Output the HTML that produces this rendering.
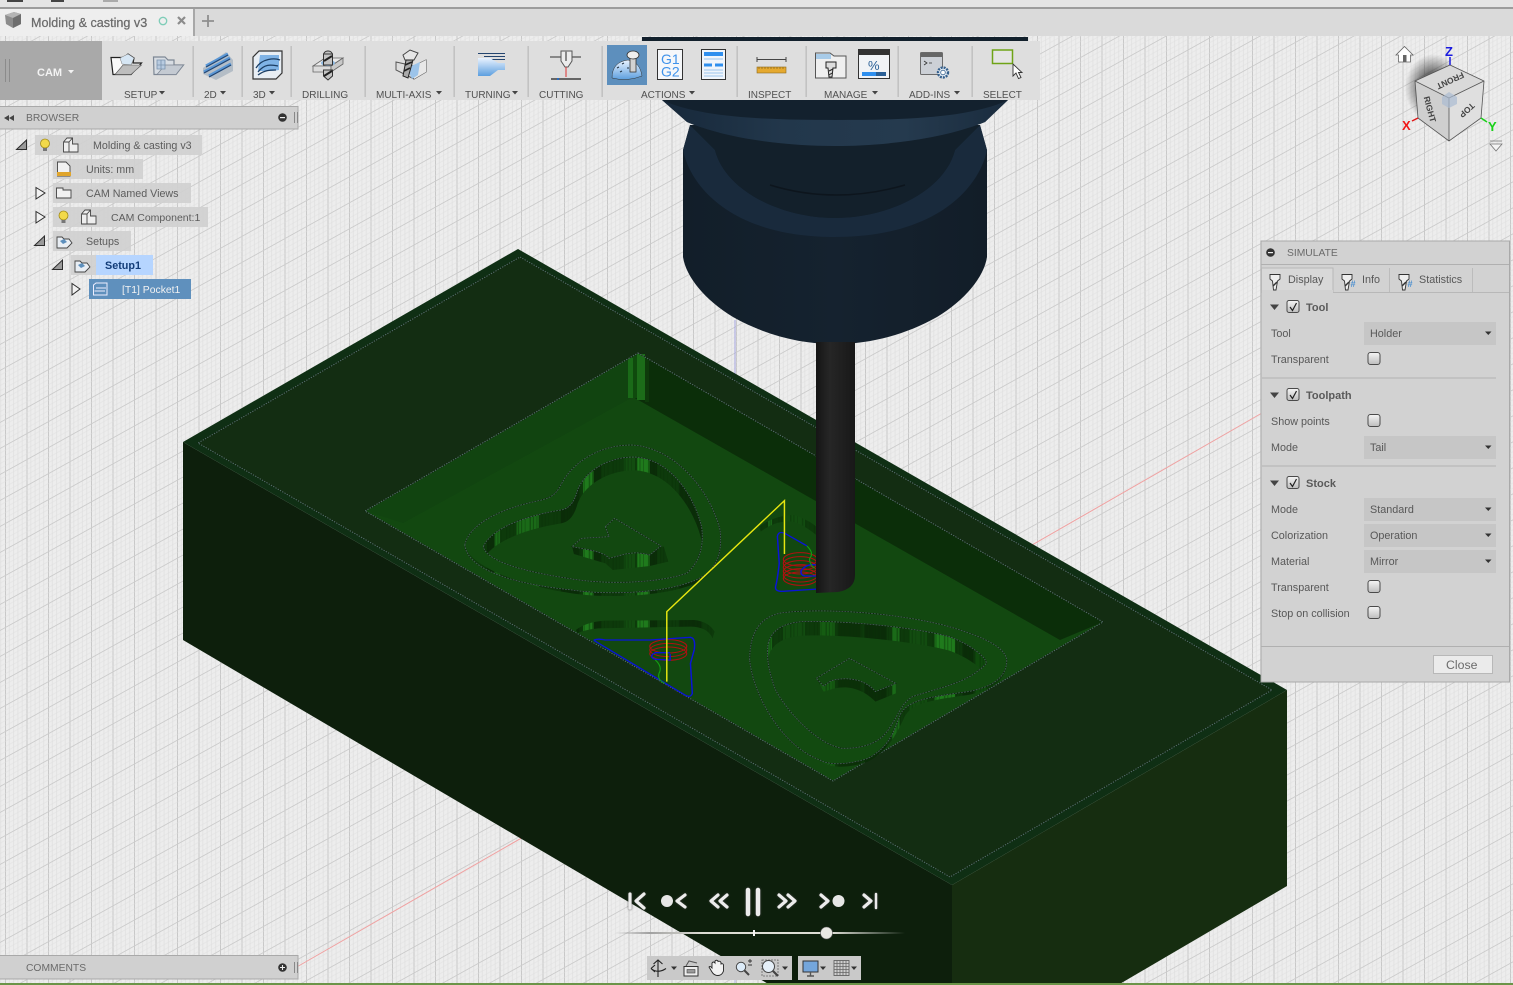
<!DOCTYPE html>
<html><head><meta charset="utf-8"><title>Molding &amp; casting v3</title>
<style>
html,body{margin:0;padding:0;width:1513px;height:985px;overflow:hidden;background:#ebebeb}
svg{display:block;position:absolute;left:0;top:0}
text{font-family:"Liberation Sans",sans-serif;fill:#5a5a5a;font-size:10.3px}
.t{font-size:10px;fill:#505050}
.b{font-size:10.7px;fill:#5c5c5c}
.p{font-size:10.8px;fill:#585858}
.h{font-size:11px;font-weight:bold;fill:#5a5a5a}
</style></head><body>
<svg width="1513" height="985" viewBox="0 0 1513 985" xmlns="http://www.w3.org/2000/svg">
<defs>
<pattern id="gv" x="5" y="0" width="21.5" height="40" patternUnits="userSpaceOnUse">
<rect width="21.5" height="40" fill="#ededed"/>
<g stroke="#e3e3e3" stroke-width="1"><path d="M4.3 0V40M8.6 0V40M12.9 0V40M17.2 0V40"/></g>
<path d="M.5 0V40" stroke="#c8c8c8" stroke-width="1"/>
</pattern>
<pattern id="gd" x="0" y="6" width="40" height="26" patternUnits="userSpaceOnUse" patternTransform="skewY(-29)">
<g stroke="#dedede" stroke-width="1" opacity=".5"><path d="M0 5.2H40M0 10.4H40M0 15.6H40M0 20.8H40"/></g>
<path d="M0 .5H40" stroke="#cbcbcb" stroke-width="1"/>
</pattern>
<pattern id="st" width="1600" height="40" patternUnits="userSpaceOnUse">
<rect width="1600" height="40" fill="#0d3a0b"/>
<g>
<rect x="100" width="20" height="40" fill="#0a2c08"/><rect x="120" width="15" height="40" fill="#1a6a18"/>
<rect x="180" width="60" height="40" fill="#1a6a18"/><rect x="300" width="50" height="40" fill="#0a2c08"/>
<rect x="360" width="28" height="40" fill="#1f7a1c"/><rect x="388" width="20" height="40" fill="#0a2c08"/>
<rect x="470" width="30" height="40" fill="#124c10"/><rect x="505" width="35" height="40" fill="#1f7a1c"/>
<rect x="540" width="20" height="40" fill="#0a2c08"/><rect x="620" width="60" height="40" fill="#0a2c08"/>
<rect x="860" width="10" height="40" fill="#1a6a18"/><rect x="900" width="60" height="40" fill="#124c10"/>
<rect x="1000" width="40" height="40" fill="#155c12"/><rect x="1050" width="60" height="40" fill="#0b3008"/>
<rect x="1120" width="60" height="40" fill="#0a2c08"/><rect x="1195" width="20" height="40" fill="#1a6a18"/>
<rect x="1240" width="50" height="40" fill="#124c10"/><rect x="1310" width="55" height="40" fill="#1f7a1c"/>
<rect x="1385" width="30" height="40" fill="#0a2c08"/><rect x="1420" width="30" height="40" fill="#0f4a0d"/>
</g>
<path d="M0,20H1600" stroke="#083006" stroke-width="40" stroke-dasharray="3 7 2 11 4 5" opacity=".45"/>
</pattern>
<linearGradient id="sl" x1="0" x2="1"><stop offset="0" stop-color="#999" stop-opacity="0"/><stop offset=".12" stop-color="#a0a0a0"/><stop offset=".3" stop-color="#dcdcd4"/><stop offset=".75" stop-color="#dcdcd4"/><stop offset="1" stop-color="#ddd" stop-opacity="0"/></linearGradient>
<linearGradient id="hold" x1="0" x2="1"><stop offset="0" stop-color="#121e29"/><stop offset=".5" stop-color="#15222f"/><stop offset="1" stop-color="#121d28"/></linearGradient>
<linearGradient id="sh" x1="0" x2="1"><stop offset="0" stop-color="#151515"/><stop offset=".35" stop-color="#262626"/><stop offset="1" stop-color="#181818"/></linearGradient>
<linearGradient id="cb" x1="0" x2="0" y1="0" y2="1"><stop offset="0" stop-color="#f6f6f6"/><stop offset="1" stop-color="#bdbdbd"/></linearGradient>
<linearGradient id="blu" x1="0" x2="0" y1="0" y2="1"><stop offset="0" stop-color="#eaf3ff"/><stop offset="1" stop-color="#5c9fdf"/></linearGradient>
<linearGradient id="band" x1="0" x2="1"><stop offset="0" stop-color="#17283a"/><stop offset=".35" stop-color="#22374b"/><stop offset=".7" stop-color="#253a4e"/><stop offset="1" stop-color="#1a2c3e"/></linearGradient>
<radialGradient id="shd"><stop offset=".45" stop-color="#333" stop-opacity=".7"/><stop offset="1" stop-color="#444" stop-opacity="0"/></radialGradient>
<path id="lo" d="M40,345C50,290 120,240 240,212C290,200 290,180 310,145C350,80 420,45 490,45C600,50 700,170 730,300C740,400 700,440 640,460C560,490 420,495 330,480C200,465 50,430 40,345Z"/>
<path id="ro" d="M810,690C810,620 830,560 900,548C1000,535 1200,545 1350,590C1440,620 1500,650 1505,690C1505,740 1470,770 1400,785C1300,800 1230,810 1215,860C1200,900 1190,950 1130,985C1090,1000 1030,1010 1000,990C900,950 820,800 810,690Z"/>
<path id="li" d="M90,350C110,300 190,260 300,240C330,235 340,200 345,180C370,110 450,75 510,82C600,95 660,200 680,290C690,370 660,410 640,430C560,460 420,465 320,445C230,430 100,400 90,350Z"/>
<path id="ri" d="M860,640C870,600 900,580 950,575C1050,570 1250,590 1350,620C1400,640 1450,680 1450,700C1400,760 1330,770 1250,800C1220,820 1215,850 1190,890C1160,950 1100,955 1060,955C1000,945 920,860 880,780C860,720 855,680 860,640Z"/>
<path id="k1" d="M420,290L445,265L570,348L540,375C490,360 470,375 430,385C415,365 370,358 330,350L355,325L430,320Z"/>
<path id="k2" d="M990,745L1080,685L1205,760L1150,785C1120,745 1070,740 1030,752L1010,768Z"/>
<clipPath id="lh"><use href="#li"/></clipPath>
<clipPath id="rh"><use href="#ri"/></clipPath>
</defs>

<!-- viewport grid -->
<rect width="1513" height="985" fill="url(#gv)"/>
<rect width="1513" height="985" fill="url(#gd)"/>
<path d="M295,968L1262,413" stroke="#f0a0a0" stroke-width="1" fill="none"/>
<path d="M735,320V378" stroke="#a5a5e0" stroke-width="1"/>
<path d="M735,960V985" stroke="#b5b5e6" stroke-width="1"/>

<!-- block sides -->
<polygon points="183,442 952,885 952,985 770,985 183,640" fill="#0d1f0c"/>
<polygon points="952,885 1287,690 1287,886 1118,985 952,985" fill="#162d10"/>
<!-- block top -->
<polygon points="518,249 1287,690 952,885 183,442" fill="#0f2f14"/>
<polygon points="520,257 1272,690 950,877 198,443" fill="#132d12"/>
<polygon points="520,257 1272,690 950,877 198,443" fill="none" stroke="#0c1f0c" stroke-width="1"/>
<polygon points="520,257 1272,690 950,877 198,443" fill="none" stroke="#566f6b" stroke-width="1" stroke-dasharray="1.4 1.2"/>
<!-- pocket -->
<polygon points="638,353 1103,622 833,781 365,511" fill="#124810"/>
<polygon points="638,353 633,397 403,523 365,511" fill="#114410"/>
<polygon points="638,353 1103,622 1060,640 633,397" fill="#0b2e09"/>
<g><rect x="628" y="358" width="5" height="40" fill="#1a6a18"/><rect x="633" y="356" width="4" height="42" fill="#0f4a0d"/><rect x="637" y="354" width="8" height="46" fill="#1c6c19"/><rect x="645" y="358" width="4" height="44" fill="#0e3a0b"/></g>
<polygon points="638,353 1103,622 833,781 365,511" fill="none" stroke="#0c1f0c" stroke-width="1"/>
<polygon points="638,353 1103,622 833,781 365,511" fill="none" stroke="#566f6b" stroke-width="1" stroke-dasharray="1.4 1.2"/>

<!-- hearts & toolpath, in detail coords -->
<g transform="translate(450,430) scale(.36995,.33333)">
<use href="#lo" fill="#124a10"/><use href="#ro" fill="#124a10"/>
<path d="M40,345C50,410 200,470 330,490C420,505 560,500 640,470C700,450 740,410 730,300C738,400 700,440 640,460C560,490 420,495 330,480C200,465 60,430 40,345Z" fill="url(#st)"/>
<path d="M1000,990C1030,1022 1090,1010 1130,995C1190,960 1210,900 1225,870C1240,820 1300,810 1400,795C1470,780 1505,750 1505,690C1505,740 1470,770 1400,785C1300,800 1230,810 1215,860C1200,900 1190,950 1130,985C1090,1000 1030,1010 1000,990Z" fill="url(#st)"/>
<g clip-path="url(#lh)">
<rect x="60" y="60" width="660" height="420" fill="url(#st)"/>
<use href="#li" transform="translate(0,40)" fill="#124810"/>
<rect x="60" y="450" width="660" height="30" fill="#124810"/>
</g>
<g clip-path="url(#rh)">
<rect x="840" y="560" width="630" height="420" fill="url(#st)"/>
<use href="#ri" transform="translate(0,42)" fill="#124810"/>
</g>
<g fill="none" stroke="#0a1c0a" stroke-width="2.4">
<use href="#lo"/><use href="#ro"/><use href="#li"/><use href="#ri"/>
</g>
<g fill="none" stroke="#466058" stroke-width="2.4" stroke-dasharray="5 3">
<use href="#lo"/><use href="#ro"/><use href="#li"/><use href="#ri"/>
</g>
<!-- key shapes -->
<path d="M330,350L335,372L420,400L440,420L540,408L590,395L578,350L470,345L430,320L355,325Z" fill="url(#st)"/>
<use href="#k1" fill="#124810" stroke="#0a1c0a" stroke-width="2.4"/>
<use href="#k1" fill="none" stroke="#466058" stroke-width="2.4" stroke-dasharray="5 3"/>
<path d="M990,745L1010,785L1040,775C1080,765 1120,780 1150,815L1205,790L1205,760L1080,705Z" fill="url(#st)"/>
<use href="#k2" fill="#124810" stroke="#0a1c0a" stroke-width="2.4"/>
<use href="#k2" fill="none" stroke="#466058" stroke-width="2.4" stroke-dasharray="5 3"/>
<!-- partial pockets -->
<path d="M340,600Q370,575 420,572L660,570Q700,575 715,605L710,625Q695,590 650,590L400,595Q360,600 345,610Z" fill="url(#st)"/>
<path d="M835,290Q880,255 930,255Q970,270 990,290V315Q950,280 925,275Q880,270 840,305Z" fill="url(#st)"/>
<!-- toolpaths -->
<g fill="none" stroke="#b01010" stroke-width="3">
<ellipse cx="947" cy="388" rx="46" ry="20"/><ellipse cx="947" cy="400" rx="46" ry="20"/><ellipse cx="947" cy="412" rx="46" ry="20"/><ellipse cx="947" cy="424" rx="46" ry="20"/><ellipse cx="947" cy="436" rx="46" ry="20"/><ellipse cx="947" cy="446" rx="46" ry="20"/>
<ellipse cx="590" cy="649" rx="50" ry="20"/><ellipse cx="590" cy="660" rx="50" ry="20"/><ellipse cx="590" cy="671" rx="50" ry="20"/>
</g>
<g fill="none" stroke="#0a14d8" stroke-width="4">
<path d="M965,348L905,310Q887,302 885,320L890,400Q885,450 880,470Q878,485 900,484L995,477"/>
<path d="M990,405Q965,400 950,420Q945,435 960,438L995,438"/>
<path d="M390,630Q400,625 420,630L540,630L650,622Q665,625 660,660L650,700L655,790Q650,805 635,795L390,632Z"/>
<path d="M595,668H555Q535,680 555,688L595,690V672"/>
</g>
<g fill="none" stroke="#12a012" stroke-width="3">
<path d="M965,348Q985,370 972,385Q970,400 985,415"/>
<path d="M555,690Q575,710 565,730Q560,750 580,760"/>
</g>
<path d="M904,372V212L586,545V755" fill="none" stroke="#e6e610" stroke-width="4"/>
</g>

<!-- holder -->
<path d="M690,125L683,150V257C686,277 705,300 733,317C765,335 800,344 835,344C870,344 905,335 937,317C965,300 984,277 987,257V150L980,125Z" fill="url(#hold)"/>
<path d="M683,150C690,185 730,237 835,237C940,237 980,185 987,150L980,125L955,150C945,190 890,218 835,218C780,218 725,190 715,150L690,125Z" fill="#192a3c"/>
<path d="M690,125L715,150C725,190 780,218 835,218C890,218 945,190 955,150L980,125Z" fill="#13202b"/>
<path d="M770,185Q835,205 905,185" stroke="#0d151d" stroke-width="1.500" fill="none"/>
<path d="M655,41H1015L1008,100L985,122C940,140 880,146 835,146C790,146 730,140 687,122L662,100Z" fill="#13212e"/>
<path d="M662,100C700,118 770,120 835,120C905,120 970,118 1008,100L985,122C940,140 880,146 835,146C790,146 730,140 687,122Z" fill="url(#band)"/>
<rect x="642" y="37" width="386" height="5" fill="#12202c"/>
<!-- shank -->
<path d="M816,342H855V575Q855,589 838,592L816,593Z" fill="url(#sh)"/>

<!-- top chrome -->
<rect width="1513" height="8" fill="#e4e4e4"/>
<rect y="7" width="1513" height="2" fill="#9c9c9c"/>
<rect x="7" y="0" width="16" height="2" fill="#444"/><rect x="51" y="0" width="13" height="2" fill="#444"/><rect x="103" y="0" width="15" height="2" fill="#aaa"/>
<rect y="9" width="1513" height="27" fill="#dadada"/>
<rect y="9" width="193" height="27" fill="#eeeeee"/>
<rect x="193" y="9" width="2" height="27" fill="#a8a8a8"/>
<path d="M5,15L14,12L21,14V24L13,28L6,24Z" fill="#8c8c8c"/><path d="M5,15L13,18L21,14L14,12Z" fill="#b5b5b5"/><path d="M13,18V28L21,24V14Z" fill="#6e6e6e"/>
<text x="31" y="27" style="font-size:12.600px;fill:#6b6b6b;stroke:#6b6b6b;stroke-width:.25">Molding &amp; casting v3</text>
<circle cx="163" cy="21" r="3.700" fill="none" stroke="#7fcdb8" stroke-width="1.300"/>
<path d="M178,17L185,24M185,17L178,24" stroke="#8c8c8c" stroke-width="2.200"/>
<path d="M208,15V27M202,21H214" stroke="#8e8e8e" stroke-width="1.800"/>

<!-- toolbar -->
<rect y="41" width="1040" height="59" fill="#dedede"/>
<rect y="41" width="102" height="59" fill="#a9a9a9"/>
<path d="M5.500,59V82M9.500,59V82" stroke="#8b8b8b" stroke-width="1"/>
<text x="37" y="76" style="font-size:11px;font-weight:bold;fill:#f3f3f3">CAM</text>
<path d="M68,70h6l-3,3.500z" fill="#f3f3f3"/>
<g fill="#bcbcbc"><rect x="192.500" y="46" width="1.300" height="51"/><rect x="241.500" y="46" width="1.300" height="51"/><rect x="290.500" y="46" width="1.300" height="51"/><rect x="364.500" y="46" width="1.300" height="51"/><rect x="453.500" y="46" width="1.300" height="51"/><rect x="527.500" y="46" width="1.300" height="51"/><rect x="601.500" y="46" width="1.300" height="51"/><rect x="736.500" y="46" width="1.300" height="51"/><rect x="805.500" y="46" width="1.300" height="51"/><rect x="897.500" y="46" width="1.300" height="51"/><rect x="971.500" y="46" width="1.300" height="51"/></g>
<g>
<text class="t" x="124" y="98">SETUP</text><path d="M159,91h6l-3,3.500z" fill="#444"/>
<text class="t" x="204" y="98">2D</text><path d="M220,91h6l-3,3.500z" fill="#444"/>
<text class="t" x="253" y="98">3D</text><path d="M269,91h6l-3,3.500z" fill="#444"/>
<text class="t" x="302" y="98">DRILLING</text>
<text class="t" x="376" y="98">MULTI-AXIS</text><path d="M436,91h6l-3,3.500z" fill="#444"/>
<text class="t" x="465" y="98">TURNING</text><path d="M512,91h6l-3,3.500z" fill="#444"/>
<text class="t" x="539" y="98">CUTTING</text>
<text class="t" x="641" y="98">ACTIONS</text><path d="M689,91h6l-3,3.500z" fill="#444"/>
<text class="t" x="748" y="98">INSPECT</text>
<text class="t" x="824" y="98">MANAGE</text><path d="M872,91h6l-3,3.500z" fill="#444"/>
<text class="t" x="909" y="98">ADD-INS</text><path d="M954,91h6l-3,3.500z" fill="#444"/>
<text class="t" x="983" y="98">SELECT</text>
</g>
<!-- setup icons -->
<path d="M111,57.500H124L128,54L134,58L133,63H141.500L131,74.500H113Z" fill="#fafafa" stroke="#222" stroke-width="1.200"/>
<path d="M120,58L128,54L134,58L131,65L122,64Z" fill="#d6e6f4" stroke="#777" stroke-width=".5"/>
<path d="M115,74.500L123,65H141.500L131,74.500Z" fill="#bdbdbd" stroke="#555" stroke-width=".6"/>
<path d="M153.500,57H165L168,60H174V65H183.500L176,74.500H154Z" fill="#d8dde3" stroke="#7d8794" stroke-width="1.200"/>
<path d="M157,74.500L165,65H183.500L176,74.500Z" fill="#c4cad2" stroke="#7d8794" stroke-width=".7"/>
<path d="M157,60h8v9h-8zM157,65h8M161,60v9" fill="#b8cbe0" stroke="#7b93ad" stroke-width=".8"/>
<!-- 2D -->
<path d="M203,68L226,52L233,60V71L216,80L203,74Z" fill="#b4bdc6"/>
<path d="M206,66L228,54M204,72L230,58M209,76L231,64" stroke="#5a97d6" stroke-width="3" fill="none"/>
<path d="M206,66L228,54M204,72L230,58M209,76L231,64" stroke="#24456f" stroke-width="1" fill="none" transform="translate(0,1)"/>
<!-- 3D -->
<path d="M253,57L259,51H282V73L276,79H253Z" fill="#e8eef4" stroke="#333" stroke-width="1.200"/>
<path d="M260,55H279V70L272,71H258Z" fill="#7fb3e6"/>
<path d="M256,68C262,58 275,58 280,60M258,72C265,63 272,65 278,66M258,75C265,70 270,70 276,70" stroke="#1b3d63" stroke-width="1.300" fill="none"/>
<!-- drilling -->
<rect x="323.500" y="51" width="9" height="14" rx="4" fill="#c4c4c4" stroke="#333" stroke-width="1"/>
<path d="M313,66L325,58H343L331,66Z" fill="#eaeaea" stroke="#666" stroke-width=".8"/>
<path d="M313,66H331V72H313Z" fill="#dcdcdc" stroke="#666" stroke-width=".8"/>
<path d="M331,66L343,58V64L331,72Z" fill="#c8c8c8" stroke="#666" stroke-width=".8"/>
<ellipse cx="328" cy="63" rx="7" ry="3" fill="#8db8e0"/>
<rect x="323.500" y="54" width="9" height="11" fill="#c4c4c4" stroke="#333" stroke-width="1"/>
<path d="M323.500,70H332.500V76L328,80L323.500,76Z" fill="#c4c4c4" stroke="#333" stroke-width="1"/>
<path d="M324,61L332,56M324,76L332,71" stroke="#222" stroke-width="2"/>
<!-- multi-axis -->
<path d="M396,62L414,66L426,60V72L414,79L396,70Z" fill="#dcdcdc" stroke="#555" stroke-width="1"/>
<path d="M414,66L426,60V72L414,79Z" fill="#e8e8e8"/><path d="M407,68L420,62L418,75L412,79Z" fill="#9cc4ea"/>
<path d="M403,55L410,50L418,53L414,60L405,60Z" fill="#e6e6e6" stroke="#444" stroke-width="1"/>
<path d="M406,60L413,60L408,78L403,76Z" fill="#aaa" stroke="#222" stroke-width="1"/><path d="M405,65L412,62M404,71L410,68" stroke="#222" stroke-width="1.600"/>
<!-- turning -->
<path d="M478,53.500h27M484,56.500h21M490,59.500h15" stroke="#24456f" stroke-width="1"/>
<path d="M478,58H490L498,63H505V70H498L490,76H478Z" fill="url(#blu)"/>
<!-- cutting -->
<path d="M550,57H581" stroke="#333" stroke-width="1"/>
<path d="M561,51H572V61L568,67H565L561,61Z" fill="#ececec" stroke="#555" stroke-width="1"/>
<path d="M566,51V61" stroke="#888" stroke-width="2"/>
<path d="M566,67V77" stroke="#d33" stroke-width="1"/>
<rect x="551" y="78" width="30" height="2" fill="#666"/><rect x="557" y="78" width="2" height="2" fill="#2a6cc0"/>
<!-- actions -->
<rect x="607" y="45" width="40" height="40" fill="#5d8fbd"/>
<path d="M612,78Q612,62 628,60Q640,62 642,76Q627,82 612,78Z" fill="url(#blu)" stroke="#333" stroke-width=".5"/>
<path d="M617,68l2,-1M622,64l2,-1M620,72l2,-1M627,68l2,0" stroke="#234" stroke-width="1"/>
<rect x="630" y="56" width="6" height="16" fill="#d2d2d2" stroke="#333" stroke-width=".8"/>
<ellipse cx="633" cy="55" rx="6" ry="4" fill="#eee" stroke="#333" stroke-width=".8"/>
<rect x="657.500" y="49.500" width="25" height="30" fill="#f5f7fa" stroke="#333" stroke-width="1"/>
<text x="661" y="64" style="font-size:14px;fill:#3f92ea">G1</text><text x="661" y="76.500" style="font-size:14px;fill:#3f92ea">G2</text>
<rect x="701.500" y="49.500" width="24" height="30" fill="#f0f5fb" stroke="#333" stroke-width="1"/>
<rect x="704" y="52" width="19" height="4" fill="#2f8fee"/><path d="M704,59h19M704,70h19M704,73h19M704,76h19" stroke="#9cc5ee" stroke-width="1"/><path d="M704,65h8M715,65h8" stroke="#2f8fee" stroke-width="3"/>
<!-- inspect -->
<path d="M757,59.500H786M757,57V62M786,57V62" stroke="#444" stroke-width="1" fill="none"/>
<rect x="757" y="67" width="29" height="6" fill="#e5a92f" stroke="#8c6a20" stroke-width=".6"/>
<path d="M759,67v2M762,67v2M765,67v2M768,67v2M771,67v2M774,67v2M777,67v2M780,67v2M783,67v2" stroke="#7a5a15" stroke-width=".6"/>
<!-- manage -->
<path d="M815.500,53H830L834,56H846V78H815.500Z" fill="#efefef" stroke="#555" stroke-width="1"/>
<rect x="816" y="54" width="15" height="5" fill="#a8cbe8"/>
<path d="M826,62H836V68H833L832,77H829L828,68H826Z" fill="#ddd" stroke="#222" stroke-width="1"/>
<path d="M829,71L833,69M829,75L832,73" stroke="#222" stroke-width="1"/>
<rect x="858.500" y="49.500" width="31" height="29" fill="#f1f3f6" stroke="#333" stroke-width="1"/>
<rect x="858" y="49" width="32" height="6" fill="#333"/>
<text x="868" y="70" style="font-size:13px;fill:#2a5f96">%</text>
<rect x="862" y="72" width="14" height="4" fill="#2f8fee"/><rect x="876" y="72" width="10" height="4" fill="#2a5f96"/>
<!-- add-ins -->
<rect x="920.500" y="52.500" width="22" height="22" rx="1" fill="#ccd0d6" stroke="#6b6b6b" stroke-width="1"/>
<rect x="921" y="53" width="21" height="4" fill="#666"/>
<path d="M924,61l3,2-3,2M929,63h3" stroke="#333" stroke-width=".8" fill="none"/>
<circle cx="943" cy="72.500" r="5" fill="#e6eef6" stroke="#34608e" stroke-width="2.400" stroke-dasharray="2 1"/><circle cx="943" cy="72.500" r="2.300" fill="#fff" stroke="#34608e" stroke-width=".8"/>
<!-- select -->
<rect x="992.500" y="50" width="20" height="13.500" fill="#eee" fill-opacity=".4" stroke="#6fa317" stroke-width="1.500"/>
<path d="M1013,64V76L1016,73L1018.500,78.500L1021,77.500L1018.500,72.500H1022Z" fill="#fff" stroke="#333" stroke-width=".9"/>

<!-- browser -->
<rect x="-2" y="106.500" width="300" height="22.500" fill="#d0d0d0" stroke="#a9a9a9"/>
<path d="M9,115v6l-5,-3zM14,115v6l-5,-3z" fill="#444"/>
<text x="26" y="121" style="font-size:10.300px;fill:#6a6a6a">BROWSER</text>
<circle cx="282.500" cy="117.500" r="4.300" fill="#333"/><rect x="280" y="117" width="5" height="1.200" fill="#eee"/>
<path d="M294.500,112v11M297.500,112v11" stroke="#888" stroke-width="1"/>
<g fill="#d0d0d0" fill-opacity=".92">
<rect x="35" y="135" width="167" height="20"/><rect x="53" y="159" width="90" height="20"/><rect x="53" y="183" width="138" height="20"/><rect x="53" y="207" width="155" height="20"/><rect x="53" y="231" width="78" height="20"/><rect x="71" y="255" width="25" height="20"/>
</g>
<rect x="96" y="255" width="57" height="20" fill="#b6d5ff"/>
<rect x="89" y="279" width="102" height="20" fill="#5f90bd"/>
<text class="b" x="93" y="149">Molding &amp; casting v3</text>
<text class="b" x="86" y="173">Units: mm</text>
<text class="b" x="86" y="197">CAM Named Views</text>
<text class="b" x="111" y="221" style="font-size:10.500px">CAM Component:1</text>
<text class="b" x="86" y="245">Setups</text>
<text x="105" y="269" style="font-size:10.800px;font-weight:bold;fill:#123c78">Setup1</text>
<text x="122" y="293" style="font-size:10.400px;fill:#f2f2f2">[T1] Pocket1</text>
<!-- tree triangles -->
<g fill="#9a9a9a" stroke="#2c2c2c" stroke-width="1"><path d="M16.500,149.500L26.500,140V149.500Z"/><path d="M34.500,245.500L44.500,236V245.500Z"/><path d="M52.500,269.500L62.500,260V269.500Z"/></g>
<g fill="#f2f2f2" stroke="#2c2c2c" stroke-width="1"><path d="M36,187.500L45,193L36,199Z"/><path d="M36,211.500L45,217L36,223Z"/><path d="M72,283.500L80,289L72,295Z"/></g>
<!-- bulbs -->
<g><circle cx="45" cy="143.500" r="4.500" fill="#f2d94a" stroke="#a08a18" stroke-width=".8"/><rect x="43" y="148" width="4" height="3" fill="#777"/><circle cx="63.500" cy="215.500" r="4.500" fill="#f2d94a" stroke="#a08a18" stroke-width=".8"/><rect x="61.500" y="220" width="4" height="3" fill="#777"/></g>
<!-- component icons -->
<g fill="#eee" stroke="#444" stroke-width=".9"><path d="M63.500,142L67,138H72.500V144H78V152H63.500Z"/><path d="M63.500,142H69V152M69,142L72.500,138"/><path d="M81.500,214L85,210H90.500V216H96V224H81.500Z"/><path d="M81.500,214H87V224M87,214L90.500,210"/></g>
<!-- units -->
<path d="M57.500,162H66L70,166V176H57.500Z" fill="#f2f2f2" stroke="#444" stroke-width=".9"/><rect x="57" y="172" width="14" height="4" fill="#e0a52c"/>
<!-- folders -->
<path d="M56.500,188H63V190H71V198H56.500Z" fill="#f2f2f2" stroke="#444" stroke-width=".9"/>
<g fill="#e9eef4" stroke="#444" stroke-width=".9"><path d="M57,237H62L64,239H69L72,243L67,248H57Z"/><path d="M75,261H80L82,263H87L90,267L85,272H75Z"/></g>
<g fill="#5d8fbd"><path d="M60,241l4,-2l3,3l-4,2z"/><path d="M78,265l4,-2l3,3l-4,2z"/></g>
<path d="M93.500,285L96,283H107V295H93.500Z" fill="#5f90bd" stroke="#eef" stroke-width="1"/><path d="M96,288H106M94.500,291H105" stroke="#eef" stroke-width="1" fill="none"/>

<!-- comments -->
<rect x="-2" y="955.500" width="300" height="23.500" fill="#d0d0d0" stroke="#a9a9a9"/>
<text x="26" y="971" style="font-size:10.300px;fill:#6a6a6a">COMMENTS</text>
<circle cx="282.500" cy="967.500" r="4.300" fill="#333"/><path d="M280,967.500h5M282.500,965v5" stroke="#eee" stroke-width="1.100"/>
<path d="M294.500,962v11M297.500,962v11" stroke="#888" stroke-width="1"/>

<!-- view cube -->
<ellipse cx="1433" cy="88" rx="28" ry="34" fill="url(#shd)"/>
<path d="M1450,65L1484,81L1481,118L1449,141L1418,118L1415,81Z" fill="#d9d9d9"/>
<path d="M1415,81L1449,98L1449,141L1418,118Z" fill="#cfcfcf"/>
<path d="M1484,81L1449,98L1449,141L1481,118Z" fill="#dfdfdf"/>
<path d="M1450,65L1484,81L1481,118L1449,141L1418,118L1415,81Z M1415,81L1449,98 M1484,81L1449,98 M1449,98V141" fill="none" stroke="#555" stroke-width=".8"/>
<path d="M1449,92L1457,97V104L1449,108L1442,104V97Z" fill="#a9bbd2" fill-opacity=".7"/>
<text transform="translate(1449,78) rotate(155)" text-anchor="middle" style="font-size:8.500px;fill:#444;font-weight:bold">FRONT</text>
<text transform="translate(1427,110) rotate(75)" text-anchor="middle" style="font-size:8.500px;fill:#444;font-weight:bold">RIGHT</text>
<text transform="translate(1465,108) rotate(138)" text-anchor="middle" style="font-size:8.500px;fill:#444;font-weight:bold">TOP</text>
<path d="M1450,57V65" stroke="#1a1ae0" stroke-width="1.500"/><path d="M1418,118L1412,121" stroke="#e01818" stroke-width="1.500"/><path d="M1481,118L1487,122" stroke="#18d018" stroke-width="1.500"/>
<text x="1445" y="56" style="font-size:13px;font-weight:bold;fill:#1a1ae0">Z</text>
<text x="1402" y="130" style="font-size:13px;font-weight:bold;fill:#f01818">X</text>
<text x="1488" y="131" style="font-size:13px;font-weight:bold;fill:#18d018">Y</text>
<path d="M1396,55L1404.500,46.500L1413,55H1410.500V62H1398.500V55Z" fill="#fff" stroke="#666" stroke-width=".8"/><rect x="1403" y="55" width="3.500" height="7" fill="#666"/>
<path d="M1490,141H1502M1490,144H1502L1496,151Z" fill="#f4f4f4" stroke="#777" stroke-width=".8"/>

<!-- simulate panel -->
<rect x="1261" y="241" width="248.500" height="441" fill="#d2d2d2" stroke="#a9a9a9"/>
<path d="M1261,264.500H1509" stroke="#b0b0b0"/>
<circle cx="1270.500" cy="252.500" r="4.300" fill="#333"/><rect x="1268" y="252" width="5" height="1.200" fill="#eee"/>
<text x="1287" y="256" style="font-size:10.300px;fill:#6a6a6a">SIMULATE</text>
<path d="M1261,292.500H1509" stroke="#b8b8b8"/>
<path d="M1261.500,292.500V268H1333V292.500" fill="#d8d8d8" stroke="#b8b8b8"/>
<rect x="1262" y="290" width="71" height="4" fill="#d2d2d2"/>
<path d="M1389.500,268V292M1472.500,268V292" stroke="#bcbcbc"/>
<path d="M1270,274.500H1280V279L1277.500,281L1276,290H1273.500L1272.500,281L1270,279Z" fill="#eee" stroke="#333" stroke-width=".9"/><path d="M1273,286L1277,282" stroke="#333" stroke-width="1.500"/>
<path d="M1342,274.500H1352V279L1349.500,281L1348,290H1345.500L1344.500,281L1342,279Z" fill="#eee" stroke="#333" stroke-width=".9"/><path d="M1345,286L1349,282" stroke="#333" stroke-width="1.500"/>
<path d="M1399,274.500H1409V279L1406.500,281L1405,290H1402.500L1401.500,281L1399,279Z" fill="#eee" stroke="#333" stroke-width=".9"/><path d="M1402,286L1406,282" stroke="#333" stroke-width="1.500"/>
<text x="1350.500" y="287" style="font-size:9px;font-weight:bold;fill:#4b8fd0">#</text><text x="1407.500" y="287" style="font-size:9px;font-weight:bold;fill:#4b8fd0">#</text>
<text class="p" x="1288" y="283">Display</text><text class="p" x="1362" y="283">Info</text><text class="p" x="1419" y="283">Statistics</text>

<g fill="#444"><path d="M1270,304.500h9l-4.500,5.500z"/><path d="M1270,392.500h9l-4.500,5.500z"/><path d="M1270,480.500h9l-4.500,5.500z"/></g>
<g fill="url(#cb)" stroke="#4a4a4a" stroke-width="1">
<rect x="1287" y="300.500" width="12" height="12" rx="2"/><rect x="1287" y="388.500" width="12" height="12" rx="2"/><rect x="1287" y="476.500" width="12" height="12" rx="2"/>
<rect x="1368" y="352.500" width="12" height="12" rx="2.500"/><rect x="1368" y="414.500" width="12" height="12" rx="2.500"/><rect x="1368" y="580.500" width="12" height="12" rx="2.500"/><rect x="1368" y="606.500" width="12" height="12" rx="2.500"/>
</g>
<g fill="none" stroke="#222" stroke-width="1.200"><path d="M1290,307l2.500,3.500l4,-7.500"/><path d="M1290,395l2.500,3.500l4,-7.500"/><path d="M1290,483l2.500,3.500l4,-7.500"/></g>
<text class="h" x="1306" y="311">Tool</text><text class="h" x="1306" y="399">Toolpath</text><text class="h" x="1306" y="487">Stock</text>
<text class="p" x="1271" y="337">Tool</text><text class="p" x="1271" y="363">Transparent</text>
<text class="p" x="1271" y="425">Show points</text><text class="p" x="1271" y="451">Mode</text>
<text class="p" x="1271" y="513">Mode</text><text class="p" x="1271" y="539">Colorization</text><text class="p" x="1271" y="565">Material</text><text class="p" x="1271" y="591">Transparent</text><text class="p" x="1271" y="617">Stop on collision</text>
<g fill="#c6c6c6"><rect x="1364" y="322" width="132" height="23"/><rect x="1364" y="436" width="132" height="23"/><rect x="1364" y="498" width="132" height="23"/><rect x="1364" y="524" width="132" height="23"/><rect x="1364" y="550" width="132" height="23"/></g>
<text class="p" x="1370" y="337">Holder</text><text class="p" x="1370" y="451">Tail</text><text class="p" x="1370" y="513">Standard</text><text class="p" x="1370" y="539">Operation</text><text class="p" x="1370" y="565">Mirror</text>
<g fill="#333"><path d="M1485,331.500h6.500l-3.200,3.500z"/><path d="M1485,445.500h6.500l-3.200,3.500z"/><path d="M1485,507.500h6.500l-3.200,3.500z"/><path d="M1485,533.500h6.500l-3.200,3.500z"/><path d="M1485,559.500h6.500l-3.200,3.500z"/></g>
<path d="M1262,378h234M1262,466h234" stroke="#bcbcbc" stroke-width="1.500"/>
<path d="M1261,646.500H1509" stroke="#b0b0b0"/>
<rect x="1433.500" y="655.500" width="59" height="18" fill="#ebebeb" stroke="#b8b8b8"/>
<text x="1446" y="669" style="font-size:12.300px;fill:#6a6a6a">Close</text>

<!-- playback -->
<g fill="none" stroke="#ececec" stroke-width="3.200" stroke-linecap="round" stroke-linejoin="round" style="filter:drop-shadow(0 0 1px #444)">
<path d="M630,894V908"/><path d="M644,894L636,901L644,908"/>
<path d="M685,895L677,901L685,907"/>
<path d="M718,895L711,901L718,907M727,895L720,901L727,907"/>
<path d="M748,890V914M758,890V914" stroke-width="4.500"/>
<path d="M779,895L786,901L779,907M788,895L795,901L788,907"/>
<path d="M821,895L828,901L821,907"/>
<path d="M864,895L871,901L864,907"/><path d="M876,894V908" stroke-width="2.500"/>
</g>
<circle cx="667" cy="901" r="6" fill="#e6e6e6"/><circle cx="838.500" cy="901" r="6" fill="#e6e6e6"/>
<rect x="615" y="932" width="290" height="2" fill="url(#sl)"/>
<rect x="753" y="930" width="2" height="6" fill="#f4f4f4"/>
<circle cx="826.500" cy="933" r="6" fill="#e9e9e4" stroke="#555" stroke-width=".6"/>

<!-- nav bar -->
<rect x="647" y="956" width="145" height="24" fill="#c9c9c9"/>
<rect x="798" y="956" width="63" height="24" fill="#c9c9c9"/>
<path d="M658,960V977M653.500,964L658,960L662.500,964M651,968.500Q658,974 666,968.500M651,968.500L655,965M651,968.500L655,972" fill="none" stroke="#222" stroke-width="1.100"/>
<g fill="#333"><path d="M671,966.500h6l-3,3.500z"/><path d="M782,966.500h6l-3,3.500z"/><path d="M820,966.500h6l-3,3.500z"/><path d="M851,966.500h6l-3,3.500z"/></g>
<path d="M684,966.500H698V976H684Z" fill="#eee" stroke="#333"/><rect x="687" y="969.500" width="8" height="3.500" fill="#9a9a9a" stroke="#444" stroke-width=".6"/><path d="M686,966L689,961L697,963" fill="none" stroke="#555"/>
<path d="M712,968V963Q713.500,961 715,963V961Q716.500,959.500 718,961V961.500Q720,960.500 721,962.500V964Q723,963 723.500,965V971Q722,975.500 718,975.500Q714,975.500 712,972L709,967Q710,965.500 712,968Z" fill="#f2f2f2" stroke="#222" stroke-width=".9"/>
<circle cx="741" cy="967" r="4.700" fill="#dcebf8" stroke="#444" stroke-width="1"/><path d="M744.500,970.500L749,975" stroke="#444" stroke-width="2"/>
<path d="M748,961h4M750,959v4M748,965h4" stroke="#333" stroke-width=".9"/>
<rect x="762" y="960" width="16" height="16" fill="none" stroke="#666" stroke-width=".8" stroke-dasharray="2 1"/>
<circle cx="768.500" cy="966.500" r="6" fill="#e5eff8" stroke="#444" stroke-width="1"/><path d="M773,971L778,976" stroke="#444" stroke-width="2.200"/>
<rect x="803" y="961" width="15" height="11" fill="#74a6dc" stroke="#333" stroke-width="1"/>
<path d="M807,976H814M810.500,972V976" stroke="#555" stroke-width="1.400"/>
<rect x="834" y="960.500" width="15" height="15" fill="#cfcfcf" stroke="#555" stroke-width=".8"/>
<path d="M837,960.500v15M840,960.500v15M843,960.500v15M846,960.500v15M834,963.500h15M834,966.500h15M834,969.500h15M834,972.500h15" stroke="#666" stroke-width=".8"/>

<!-- bottom edge -->
<rect y="983" width="1513" height="2" fill="#6b9448"/>
</svg>
</body></html>
